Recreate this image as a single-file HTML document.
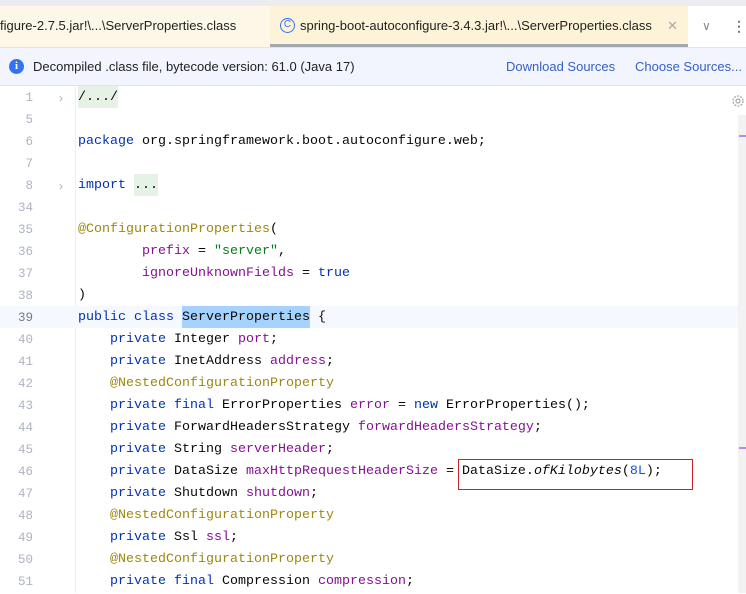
<!DOCTYPE html>
<html><head><meta charset="utf-8"><style>
*{margin:0;padding:0;box-sizing:border-box}
body{width:746px;height:593px;overflow:hidden;background:#fff;font-family:"Liberation Sans",sans-serif;position:relative}
.top{position:absolute;left:0;top:0;width:746px;height:6px;background:#ebecf0}
.tabs{position:absolute;left:0;top:6px;width:746px;height:41px;background:#fff}
.tab1{position:absolute;left:0;top:0;width:270px;height:41px;background:#fdf7e7;font-size:13px;color:#222;line-height:40px;padding-left:0}
.tab2{position:absolute;left:270px;top:0;width:418px;height:41px;background:#fdf3d8;font-size:13px;color:#222;line-height:40px;border-bottom:3px solid #a3a7b0}
.ic{position:absolute;left:10px;top:12px;width:15px;height:15px;border:1.4px solid #3574f0;border-radius:50%;color:#3574f0;font-size:10px;line-height:12px;text-align:center}
.info{position:absolute;left:0;top:47px;width:746px;height:39px;background:#f2f5fd;border-top:1px solid #dfe3ee;border-bottom:1px solid #dfe3ee;font-size:13px;line-height:38px;color:#222}
.info a{position:absolute;color:#3561c8;text-decoration:none}
.ii{position:absolute;left:9px;top:11px;width:15px;height:15px;border-radius:50%;background:#3574f0;color:#fff;font-size:11px;font-weight:bold;line-height:15px;text-align:center;font-family:"Liberation Serif",serif}
.code{position:absolute;left:0;top:86px;width:746px}
.ln{position:relative;height:22px;line-height:24px;font-family:"Liberation Mono",monospace;font-size:13.33px;white-space:pre;color:#080808}
.ln .n{position:absolute;right:713px;color:#aeb3c2;font-size:12.5px}
.ln .c{position:absolute;left:78px;top:0;height:22px}
.ln .f{position:absolute;left:59px;color:#aaa;font-family:"Liberation Sans";font-size:12px}
.hl{background:#f5f8fe}
.k{color:#0033b3}.s{color:#067d17}.a{color:#9e880d}.v{color:#871094}.m{color:#1750eb}
.fd{background:#e6f2e6;display:inline-block;height:22px}
.sel{background:#a6d2ff;display:inline-block;height:22px}
.gline{position:absolute;left:75px;top:86px;width:1px;height:507px;background:#eceef2}
</style></head><body>
<div class="top"></div>
<div class="tabs">
 <div class="tab1">figure-2.7.5.jar!\...\ServerProperties.class</div>
 <div class="tab2"><div class="ic">C</div><span style="position:absolute;left:30px">spring-boot-autoconfigure-3.4.3.jar!\...\ServerProperties.class</span><span style="position:absolute;left:397px;color:#aaa">✕</span></div>
 <span style="position:absolute;left:702px;top:0;line-height:40px;color:#888;font-size:12px">∨</span>
 <span style="position:absolute;left:732px;top:0;line-height:40px;color:#777;font-size:14px;font-weight:bold">⋮</span>
</div>
<div class="info"><div class="ii">i</div><span style="position:absolute;left:33px">Decompiled .class file, bytecode version: 61.0 (Java 17)</span><a style="left:506px">Download Sources</a><a style="left:635px">Choose Sources...</a></div>
<div class="gline"></div>
<div class="code">
<div class="ln"><span class="n">1</span><span class="f">›</span><span class="c"><span class="fd">/.../</span></span></div>
<div class="ln"><span class="n">5</span></div>
<div class="ln"><span class="n">6</span><span class="c"><span class="k">package</span> org.springframework.boot.autoconfigure.web;</span></div>
<div class="ln"><span class="n">7</span></div>
<div class="ln"><span class="n">8</span><span class="f">›</span><span class="c"><span class="k">import</span> <span class="fd">...</span></span></div>
<div class="ln"><span class="n">34</span></div>
<div class="ln"><span class="n">35</span><span class="c"><span class="a">@ConfigurationProperties</span>(</span></div>
<div class="ln"><span class="n">36</span><span class="c">        <span class="v">prefix</span> = <span class="s">"server"</span>,</span></div>
<div class="ln"><span class="n">37</span><span class="c">        <span class="v">ignoreUnknownFields</span> = <span class="k">true</span></span></div>
<div class="ln"><span class="n">38</span><span class="c">)</span></div>
<div class="ln hl"><span class="n" style="color:#767a8a">39</span><span class="c"><span class="k">public class</span> <span class="sel">ServerProperties</span> {</span></div>
<div class="ln"><span class="n">40</span><span class="c">    <span class="k">private</span> Integer <span class="v">port</span>;</span></div>
<div class="ln"><span class="n">41</span><span class="c">    <span class="k">private</span> InetAddress <span class="v">address</span>;</span></div>
<div class="ln"><span class="n">42</span><span class="c">    <span class="a">@NestedConfigurationProperty</span></span></div>
<div class="ln"><span class="n">43</span><span class="c">    <span class="k">private final</span> ErrorProperties <span class="v">error</span> = <span class="k">new</span> ErrorProperties();</span></div>
<div class="ln"><span class="n">44</span><span class="c">    <span class="k">private</span> ForwardHeadersStrategy <span class="v">forwardHeadersStrategy</span>;</span></div>
<div class="ln"><span class="n">45</span><span class="c">    <span class="k">private</span> String <span class="v">serverHeader</span>;</span></div>
<div class="ln"><span class="n">46</span><span class="c">    <span class="k">private</span> DataSize <span class="v">maxHttpRequestHeaderSize</span> = DataSize.<i>ofKilobytes</i>(<span class="m">8L</span>);</span></div>
<div class="ln"><span class="n">47</span><span class="c">    <span class="k">private</span> Shutdown <span class="v">shutdown</span>;</span></div>
<div class="ln"><span class="n">48</span><span class="c">    <span class="a">@NestedConfigurationProperty</span></span></div>
<div class="ln"><span class="n">49</span><span class="c">    <span class="k">private</span> Ssl <span class="v">ssl</span>;</span></div>
<div class="ln"><span class="n">50</span><span class="c">    <span class="a">@NestedConfigurationProperty</span></span></div>
<div class="ln"><span class="n">51</span><span class="c">    <span class="k">private final</span> Compression <span class="v">compression</span>;</span></div>
</div>
<div style="position:absolute;left:458px;top:459px;width:235px;height:31px;border:1.3px solid #c8242c"></div>
<div style="position:absolute;left:738px;top:115px;width:8px;height:478px;background:#f2f2f2"></div>
<div style="position:absolute;left:739px;top:135px;width:7px;height:2px;background:#b48de0"></div>
<div style="position:absolute;left:739px;top:447px;width:7px;height:2px;background:#b48de0"></div>
<svg style="position:absolute;left:730px;top:93px" width="16" height="16" viewBox="0 0 16 16"><circle cx="8" cy="8" r="5" fill="none" stroke="#aaa" stroke-width="1.3" stroke-dasharray="2 1.2"/><circle cx="8" cy="8" r="2" fill="none" stroke="#aaa" stroke-width="1.2"/></svg>
</body></html>
